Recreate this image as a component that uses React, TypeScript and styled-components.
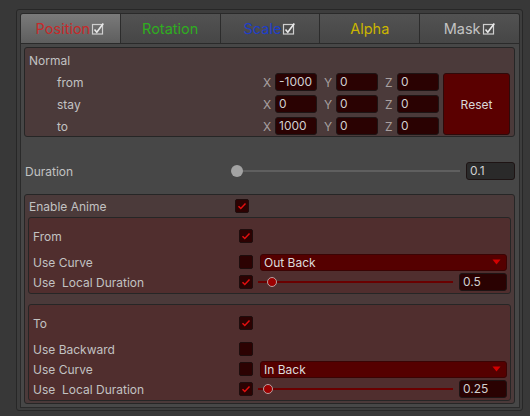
import React from "react";
import styled, { createGlobalStyle } from "styled-components";

const Global = createGlobalStyle`
  html, body { margin: 0; padding: 0; background: #383838; }
  body { font-family: Inter, "Noto Sans", sans-serif; font-size: 12px; color: #c2c2c2; }
  * { box-sizing: border-box; }
`;

const Outer = styled.div`
  margin: 9px 0 0 16px;
  width: 507px;
  border: 1px solid #272727;
  border-radius: 3px;
  background: #3d3d3d;
  padding: 3px 2px 2px 3px;
`;

const TabBar = styled.div`
  display: flex;
  height: 30px;
  border: 1px solid #2a2a2a;
  border-bottom: 0;
  border-radius: 3px 3px 0 0;
  overflow: hidden;
`;

const Tab = styled.div<{ $color: string; $active?: boolean }>`
  flex: 1;
  display: flex;
  align-items: center;
  justify-content: center;
  gap: 1px;
  font-size: 14.5px;
  color: ${(p) => p.$color};
  background: ${(p) =>
    p.$active
      ? "linear-gradient(#7a7a7a, #5e5e5e)"
      : "linear-gradient(#525252, #464646)"};
  & + & { border-left: 1px solid #2c2c2c; }
`;

const Content = styled.div`
  border: 1px solid #2a2a2a;
  background: #474747;
  padding: 3px 4px 3px 3px;
`;

const Group = styled.div<{ $tone?: "red" }>`
  background: ${(p) => (p.$tone === "red" ? "#502e2e" : "#4b3a3a")};
  border: 1px solid #262626;
  border-radius: 3px;
`;

const NormalBox = styled(Group)`
  padding: 4px 4px 1px 4px;
`;

const Header = styled.div`
  height: 18px;
  line-height: 18px;
  margin-bottom: 3px;
`;

const NormalBody = styled.div`
  display: flex;
  gap: 4px;
`;

const VecRows = styled.div`
  flex: 1;
  display: flex;
  flex-direction: column;
  gap: 4px;
`;

const VecRow = styled.div`
  height: 18px;
  display: flex;
  align-items: center;
`;

const VecLabel = styled.div`
  flex: 1;
  padding-left: 28px;
`;

const Fields = styled.div`
  display: flex;
  gap: 5px;
`;

const Field = styled.div`
  display: flex;
  align-items: center;
`;

const Axis = styled.span`
  width: 14px;
  padding-left: 2px;
  color: #a8a0a0;
`;

const Input = styled.div<{ $w?: number; $bg?: string }>`
  width: ${(p) => p.$w ?? 42}px;
  height: 18px;
  line-height: 16px;
  padding-left: 3px;
  background: ${(p) => p.$bg ?? "#2a0202"};
  border: 1px solid #1e1414;
  border-radius: 3px;
  color: #d0d0d0;
  font-size: 12px;
`;

const ResetButton = styled.div`
  width: 67px;
  display: flex;
  align-items: center;
  justify-content: center;
  background: #5a0000;
  border: 1px solid #2e0a0a;
  border-radius: 3px;
  color: #d8d8d8;
`;

const DurationRow = styled.div`
  height: 18px;
  margin: 25px 0 14px;
  padding-left: 1px;
  display: flex;
  align-items: center;
`;

const Label = styled.div`
  width: 206px;
  flex: none;
  white-space: pre;
`;

const SliderBox = styled.div<{ $track: string; $red?: boolean }>`
  position: relative;
  flex: 1;
  height: 18px;
  margin-right: 6px;
  &::before {
    content: "";
    position: absolute;
    left: ${(p) => (p.$red ? 0 : 4)}px;
    right: 0;
    top: 8px;
    height: 2px;
    background: ${(p) => p.$track};
  }
`;

const Thumb = styled.div<{ $red?: boolean }>`
  position: absolute;
  top: ${(p) => (p.$red ? 4 : 3)}px;
  width: ${(p) => (p.$red ? 10 : 12)}px;
  height: ${(p) => (p.$red ? 10 : 12)}px;
  border-radius: 50%;
  background: ${(p) => (p.$red ? "#9c0000" : "#a3a3a3")};
  border: ${(p) => (p.$red ? "1px solid #b9a0a0" : "none")};
`;

const EnableBox = styled(Group)`
  padding: 2px 3px 2px 3px;
`;

const SubBox = styled(Group)`
  padding: 9px 3px 2px 3px;
  margin-top: 2px;
  & + & { margin-top: 10px; }
`;

const PropRow = styled.div<{ $head?: boolean }>`
  height: 18px;
  display: flex;
  align-items: center;
  padding-left: 1px;
  margin-bottom: ${(p) => (p.$head ? 8 : 2)}px;
  &:last-child { margin-bottom: 0; }
`;

const Check = styled.div`
  width: 14px;
  height: 14px;
  flex: none;
  background: #2c0202;
  border: 1px solid #1e0d0d;
  border-radius: 2px;
  display: flex;
  align-items: center;
  justify-content: center;
`;

const Dropdown = styled.div`
  flex: 1;
  margin-left: 7px;
  height: 17px;
  display: flex;
  align-items: center;
  justify-content: space-between;
  padding: 0 5px 0 3px;
  background: #550000;
  border: 1px solid #3a0404;
  border-radius: 3px;
  color: #dcdcdc;
`;

const Gap = styled.div`
  width: 5px;
  flex: none;
`;

const TabCheck = () => (
  <svg width="14" height="13" viewBox="0 0 14 13">
    <rect x="1.5" y="2.5" width="10" height="9.5" fill="none" stroke="#cfcfcf" strokeWidth="1.2" />
    <path d="M3.5 7.5 L5.8 10.2 L12.3 1.5" fill="none" stroke="#e8e8e8" strokeWidth="1.7" />
  </svg>
);

const RedCheck = () => (
  <svg width="10" height="8" viewBox="0 0 10 8">
    <path d="M1.5 4.2 L3.8 6.5 L8.5 1.5" fill="none" stroke="#e40f0f" strokeWidth="1.5" />
  </svg>
);

const Arrow = () => (
  <svg width="9" height="6" viewBox="0 0 9 6">
    <path d="M0.5 0.5 H8.5 L4.5 5.5 Z" fill="#d40000" />
  </svg>
);

const Checkbox = ({ on }: { on?: boolean }) => <Check>{on ? <RedCheck /> : null}</Check>;

const RedSlider = ({ value }: { value: number }) => (
  <SliderBox $track="#6a0000" $red>
    <Thumb $red style={{ left: Math.round((value / 10) * 185) }} />
  </SliderBox>
);

const vectors = [
  { label: "from", x: "-1000", y: "0", z: "0" },
  { label: "stay", x: "0", y: "0", z: "0" },
  { label: "to", x: "1000", y: "0", z: "0" },
];

const tabs = [
  { name: "Position", color: "#c62a2a", check: true, active: true },
  { name: "Rotation", color: "#2fae1f" },
  { name: "Scale", color: "#1e3ec6", check: true },
  { name: "Alpha", color: "#cbb600" },
  { name: "Mask", color: "#c2c2c2", check: true },
];

export default function App() {
  return (
    <>
      <Global />
      <Outer>
        <TabBar>
          {tabs.map((t) => (
            <Tab key={t.name} $color={t.color} $active={t.active}>
              {t.name}
              {t.check ? <TabCheck /> : null}
            </Tab>
          ))}
        </TabBar>
        <Content>
          <NormalBox>
            <Header>Normal</Header>
            <NormalBody>
              <VecRows>
                {vectors.map((v) => (
                  <VecRow key={v.label}>
                    <VecLabel>{v.label}</VecLabel>
                    <Fields>
                      <Field><Axis>X</Axis><Input>{v.x}</Input></Field>
                      <Field><Axis>Y</Axis><Input>{v.y}</Input></Field>
                      <Field><Axis>Z</Axis><Input>{v.z}</Input></Field>
                    </Fields>
                  </VecRow>
                ))}
              </VecRows>
              <ResetButton>Reset</ResetButton>
            </NormalBody>
          </NormalBox>

          <DurationRow>
            <Label>Duration</Label>
            <SliderBox $track="#5f5f5f">
              <Thumb style={{ left: 0 }} />
            </SliderBox>
            <Input $w={49} $bg="#2a2a2a">0.1</Input>
          </DurationRow>

          <EnableBox>
            <PropRow>
              <Label>Enable Anime</Label>
              <Checkbox on />
            </PropRow>
            <SubBox $tone="red">
              <PropRow $head>
                <Label>From</Label>
                <Checkbox on />
              </PropRow>
              <PropRow>
                <Label>Use Curve</Label>
                <Checkbox />
                <Dropdown>Out Back<Arrow /></Dropdown>
              </PropRow>
              <PropRow>
                <Label>{"Use  Local Duration"}</Label>
                <Checkbox on />
                <Gap />
                <RedSlider value={0.5} />
                <Input $w={48}>0.5</Input>
              </PropRow>
            </SubBox>
            <SubBox $tone="red">
              <PropRow $head>
                <Label>To</Label>
                <Checkbox on />
              </PropRow>
              <PropRow>
                <Label>Use Backward</Label>
                <Checkbox />
              </PropRow>
              <PropRow>
                <Label>Use Curve</Label>
                <Checkbox />
                <Dropdown>In Back<Arrow /></Dropdown>
              </PropRow>
              <PropRow>
                <Label>{"Use  Local Duration"}</Label>
                <Checkbox on />
                <Gap />
                <RedSlider value={0.25} />
                <Input $w={48}>0.25</Input>
              </PropRow>
            </SubBox>
          </EnableBox>
        </Content>
      </Outer>
    </>
  );
}
